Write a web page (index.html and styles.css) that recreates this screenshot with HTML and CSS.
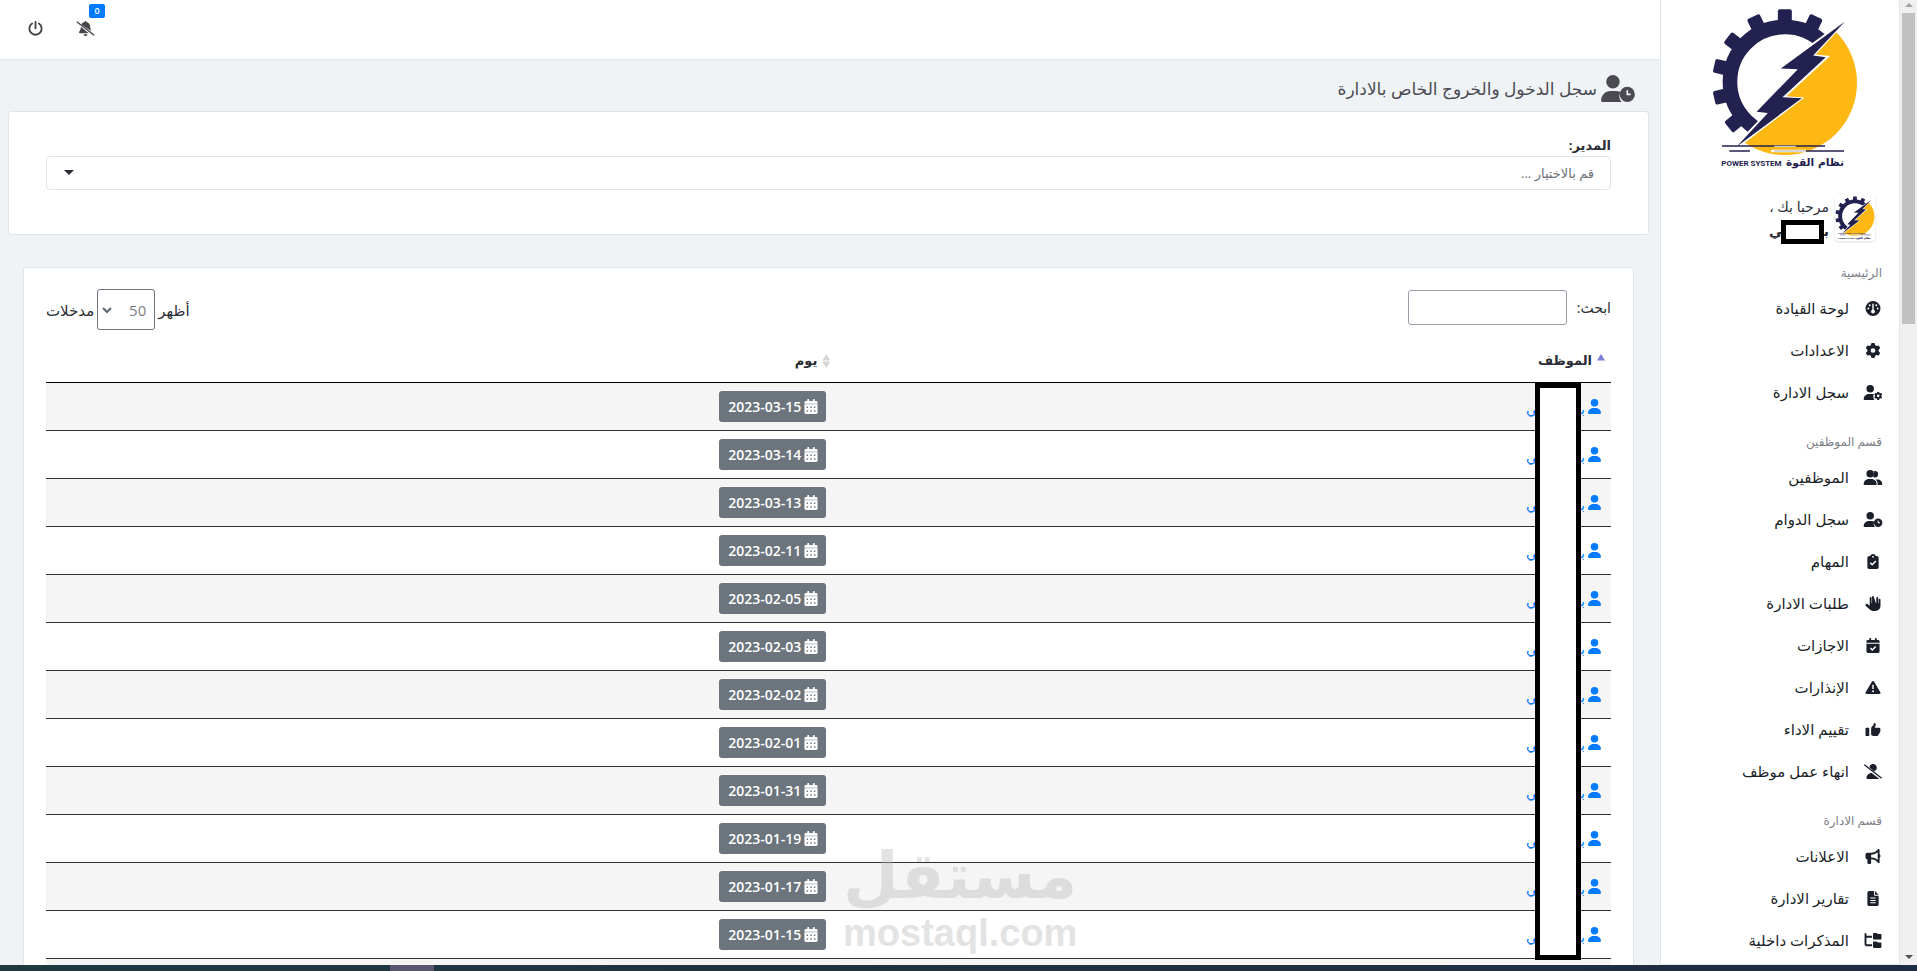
FILE: index.html
```html
<!DOCTYPE html>
<html lang="ar" dir="rtl">
<head>
  <meta charset="UTF-8">
  <meta name="viewport" content="width=device-width, initial-scale=1">
  <title>سجل الدخول والخروج الخاص بالادارة</title>
  <link rel="stylesheet" href="styles.css">
</head>
<body>

  <!-- icon set -->
  <svg class="sprite" aria-hidden="true">
    <symbol id="user" viewBox="0 0 448 512"><path d="M224 256A128 128 0 1 0 224 0a128 128 0 1 0 0 256zm-45.700 48C79.800 304 0 383.800 0 482.300C0 498.700 13.300 512 29.700 512H418.300c16.400 0 29.700-13.300 29.700-29.700C448 383.800 368.200 304 269.700 304H178.300z"/></symbol>
    <symbol id="gear" viewBox="0 0 512 512"><path d="M495.900 166.600c3.200 8.700 .5 18.400-6.400 24.600l-43.300 39.400c1.100 8.300 1.700 16.800 1.700 25.400s-.6 17.100-1.700 25.400l43.300 39.400c6.900 6.200 9.600 15.900 6.400 24.600c-4.400 11.900-9.700 23.300-15.800 34.300l-4.700 8.100c-6.600 11-14 21.400-22.100 31.200c-5.900 7.200-15.700 9.600-24.500 6.800l-55.700-17.700c-13.400 10.300-28.200 18.900-44 25.400l-12.500 57.100c-2 9.100-9 16.300-18.200 17.800c-13.800 2.300-28 3.500-42.500 3.500s-28.700-1.200-42.500-3.500c-9.200-1.500-16.200-8.700-18.200-17.800l-12.500-57.100c-15.800-6.500-30.600-15.100-44-25.400L83.100 425.900c-8.800 2.800-18.600 .3-24.500-6.800c-8.100-9.800-15.500-20.200-22.100-31.200l-4.700-8.100c-6.100-11-11.400-22.400-15.800-34.300c-3.200-8.700-.5-18.400 6.400-24.600l43.300-39.400C64.600 273.100 64 264.600 64 256s.6-17.100 1.700-25.400L22.400 191.200c-6.900-6.200-9.600-15.900-6.400-24.600c4.400-11.900 9.700-23.300 15.800-34.300l4.700-8.100c6.600-11 14-21.400 22.100-31.200c5.900-7.200 15.700-9.600 24.500-6.800l55.700 17.700c13.400-10.300 28.200-18.900 44-25.400l12.500-57.100c2-9.100 9-16.300 18.200-17.800C227.300 1.200 241.500 0 256 0s28.700 1.200 42.500 3.500c9.200 1.500 16.200 8.700 18.200 17.800l12.500 57.100c15.800 6.500 30.600 15.100 44 25.400l55.700-17.700c8.800-2.800 18.600-.3 24.500 6.800c8.100 9.800 15.500 20.200 22.100 31.200l4.700 8.100c6.100 11 11.400 22.400 15.800 34.300zM256 336a80 80 0 1 0 0-160 80 80 0 1 0 0 160z"/></symbol>
    <symbol id="user-clock" viewBox="0 0 640 512">
      <path d="M224 256A128 128 0 1 0 224 0a128 128 0 1 0 0 256zM178 304C80 304 0 384 0 482c0 17 13 30 30 30h362c-50-48-62-128-22-190-28-12-62-18-101-18z"/>
      <path fill-rule="evenodd" d="M496 224a144 144 0 1 1 0 288 144 144 0 1 1 0-288zm-16 64v96h80v-32h-48v-64z"/>
    </symbol>
    <symbol id="user-gear" viewBox="0 0 640 512">
      <path d="M224 256A128 128 0 1 0 224 0a128 128 0 1 0 0 256zM178 304C80 304 0 384 0 482c0 17 13 30 30 30h340c-40-48-52-128-22-195-24-9-48-13-79-13z"/>
      <use href="#gear" x="356" y="228" width="284" height="284"/>
    </symbol>
    <symbol id="users" viewBox="0 0 640 512">
      <path d="M224 256A128 128 0 1 0 224 0a128 128 0 1 0 0 256zM178 304C80 304 0 384 0 482c0 17 13 30 30 30h388c17 0 30-13 30-30 0-98-80-178-178-178zM609 512H471c6-9 9-20 9-32 0-62-28-118-72-156 4-1 12-2 18-2h54c88 0 160 72 160 160 0 17-14 30-31 30zM384 256c-22 0-42-6-58-18 16-24 26-54 26-86 0-36-12-68-30-94 18-12 40-20 62-20a109 109 0 0 1 0 218z"/>
    </symbol>
    <symbol id="user-slash" viewBox="0 0 640 512">
      <path d="M195 108A128 128 0 1 1 355 250zM274 304C176 304 96 384 96 482c0 17 13 30 30 30h388c6 0 12-2 17-5z"/>
      <path class="line" stroke-width="46" d="M24 24 616 488"/>
    </symbol>
    <symbol id="gauge" viewBox="0 0 512 512">
      <path fill-rule="evenodd" d="M256 0a256 256 0 1 1 0 512 256 256 0 1 1 0-512zM232 96v200a66 66 0 1 0 48 0V96zM144 112a32 32 0 1 0 0 64 32 32 0 0 0 0-64zM96 224a32 32 0 1 0 0 64 32 32 0 0 0 0-64zM368 112a32 32 0 1 0 0 64 32 32 0 0 0 0-64zM416 224a32 32 0 1 0 0 64 32 32 0 0 0 0-64z"/>
    </symbol>
    <symbol id="clipboard" viewBox="0 0 384 512">
      <path fill-rule="evenodd" d="M192 0c-42 0-77 27-91 64H64C29 64 0 93 0 128v320c0 35 29 64 64 64h256c35 0 64-29 64-64V128c0-35-29-64-64-64h-37C269 27 234 0 192 0zm0 64a32 32 0 1 1 0 64 32 32 0 1 1 0-64z"/>
      <path class="cut" d="m98 300 66 66 124-130"/>
    </symbol>
    <symbol id="hand" viewBox="0 0 512 512">
      <path d="M288 32a32 32 0 0 0-64 0v208h-16V64a32 32 0 0 0-64 0v272L72 274c-18-16-46-14-62 4s-14 46 4 62l120 112c42 38 86 60 150 60h52c97 0 176-79 176-176V128a32 32 0 0 0-64 0v112h-16V64a32 32 0 0 0-64 0v176h-16z"/>
    </symbol>
    <symbol id="calendar-check" viewBox="0 0 448 512">
      <path d="M128 0c18 0 32 14 32 32v32h128V32a32 32 0 0 1 64 0v32h48c27 0 48 21 48 48v48H0v-48c0-27 21-48 48-48h48V32c0-18 14-32 32-32zM0 192h448v272c0 27-21 48-48 48H48c-27 0-48-21-48-48z"/>
      <path class="cut" d="m138 346 64 64 114-120"/>
    </symbol>
    <symbol id="calendar" viewBox="0 0 448 512">
      <path fill-rule="evenodd" d="M128 0c18 0 32 14 32 32v32h128V32a32 32 0 0 1 64 0v32h48c27 0 48 21 48 48v48H0v-48c0-27 21-48 48-48h48V32c0-18 14-32 32-32zM0 176h448v288c0 27-21 48-48 48H48c-27 0-48-21-48-48zM76 256v48h48v-48zM200 256v48h48v-48zM324 256v48h48v-48zM76 384v48h48v-48zM200 384v48h48v-48zM324 384v48h48v-48z"/>
    </symbol>
    <symbol id="warning" viewBox="0 0 512 512">
      <path fill-rule="evenodd" d="M256 32c14 0 27 7 35 20l216 368c16 27-4 60-35 60H40c-31 0-51-33-35-60L221 52c8-13 21-20 35-20zm-24 128v144h48V160zM256 352a32 32 0 1 0 0 64 32 32 0 0 0 0-64z"/>
    </symbol>
    <symbol id="thumb" viewBox="0 0 512 512">
      <path d="M313 32c26 6 43 31 38 57l-3 12c-5 32-16 62-32 91h144c42 0 66 44 42 80 16 24 10 58-16 72 8 30-8 60-38 66 6 34-20 70-58 70H294c-24 0-46-7-65-20l-37-26V224c0-29 13-57 36-75l13-10c20-16 34-38 39-63l3-12c5-20 16-36 30-32zM32 192h64c18 0 32 14 32 32v224c0 18-14 32-32 32H32c-18 0-32-14-32-32V224c0-18 14-32 32-32z"/>
    </symbol>
    <symbol id="bullhorn" viewBox="0 0 512 512">
      <path fill-rule="evenodd" d="M480 32c0-28-34-42-55-22l-43 43c-48 48-113 75-181 75H64c-35 0-64 29-64 64v96c0 35 29 64 64 64v128c0 18 14 32 32 32h64c18 0 32-14 32-32V352h9c68 0 133 27 181 75l43 43c21 20 55 6 55-22V300c19-10 32-34 32-60s-13-50-32-60zm-64 77v262c-60-54-136-83-215-83h-9v-96h9c79 0 155-29 215-83z"/>
    </symbol>
    <symbol id="file" viewBox="0 0 384 512">
      <path fill-rule="evenodd" d="M64 0C29 0 0 29 0 64v384c0 35 29 64 64 64h256c35 0 64-29 64-64V160H256c-18 0-32-14-32-32V0zM256 0v128h128zM100 224h184v36H100zM100 304h184v36H100zM100 384h184v36H100z"/>
    </symbol>
    <symbol id="folders" viewBox="0 0 576 512">
      <path d="M64 32a32 32 0 0 0-64 0v352c0 35 29 64 64 64h192v-64H64V160h192V96H64zM288 32c0-18 14-32 32-32h96l32 32h96c18 0 32 14 32 32v128c0 18-14 32-32 32H320c-18 0-32-14-32-32zM288 320c0-18 14-32 32-32h96l32 32h96c18 0 32 14 32 32v128c0 18-14 32-32 32H320c-18 0-32-14-32-32z"/>
    </symbol>
    <symbol id="power" viewBox="0 0 512 512">
      <path class="line" stroke-width="64" stroke-linecap="round" d="M256 34v214M140 86a210 210 0 1 0 232 0"/>
    </symbol>
    <symbol id="bell-slash" viewBox="0 0 640 512">
      <path d="M178 118c26-46 66-74 110-84a32 32 0 0 1 64 0c72 16 128 80 128 156v26c0 48 16 94 44 134zM160 200l270 216H128c-30 0-40-36-20-54 34-42 52-94 52-146zM256 448h128a64 64 0 0 1-128 0z"/>
      <path class="line" stroke-width="46" d="M24 24 616 488"/>
    </symbol>
    <symbol id="logo" viewBox="155 20 445 490">
      <clipPath id="gear-side"><path d="M100 0H630L495 103 458 130 297 362 265 395 190 470H100z"/></clipPath>
      <clipPath id="sun-side"><path d="M610 12 470 163 513 167 382 288 436 292 176 490 176 520H620z"/></clipPath>
      <g clip-path="url(#gear-side)" fill="#22214f">
        <circle cx="377" cy="245" r="165" fill="none" stroke="#22214f" stroke-width="44"/>
        <rect x="356" y="27" width="42" height="44" rx="6"/>
        <rect x="356" y="27" width="42" height="44" rx="6" transform="rotate(26 377 245)"/>
        <rect x="356" y="27" width="42" height="44" rx="6" transform="rotate(-26 377 245)"/>
        <rect x="356" y="27" width="42" height="44" rx="6" transform="rotate(-52 377 245)"/>
        <rect x="356" y="27" width="42" height="44" rx="6" transform="rotate(-77 377 245)"/>
        <rect x="356" y="27" width="42" height="44" rx="6" transform="rotate(-103 377 245)"/>
        <rect x="356" y="27" width="42" height="44" rx="6" transform="rotate(-129 377 245)"/>
      </g>
      <circle cx="377" cy="248" r="217" fill="#fdb813" clip-path="url(#sun-side)"/>
      <path fill="#22214f" d="M557 64 462 166 500 171 370 291 428 294 240 434 232 440 326 339 292 335 416 207 365 205z"/>
      <path stroke="#22214f" stroke-width="5" d="M188 438H498M210 453H272M440 453H555"/>
      <path stroke="#fff" stroke-width="7" d="M336 453H440"/>
      <path stroke="#c9c9cf" stroke-width="4" d="M345 439H410M345 453H440"/>
      <text x="186" y="499" direction="ltr" class="logo-en">POWER SYSTEM</text>
      <text x="555" y="499" direction="rtl" class="logo-ar">نظام القوة</text>
    </symbol>
  </svg>

  <div class="shell">
    <div class="scrollbar" aria-hidden="true">
      <span class="arrow up"></span>
      <span class="thumb"></span>
      <span class="arrow down"></span>
    </div>

    <aside class="sidebar">
      <svg class="logo" role="img" aria-label="نظام القوة"><use href="#logo"/></svg>
      <div class="profile">
        <svg class="avatar"><use href="#logo"/></svg>
        <div class="welcome">
          <div>مرحبا بك ،</div>
          <div class="name"><span>بـ</span><span>ـي</span><i class="hide-name"></i></div>
        </div>
      </div>
      <nav>
        <h6>الرئيسية</h6>
        <a href="#"><svg><use href="#gauge"/></svg>لوحة القيادة</a>
        <a href="#"><svg><use href="#gear"/></svg>الاعدادات</a>
        <a href="#"><svg><use href="#user-gear"/></svg>سجل الادارة</a>
        <h6>قسم الموظفين</h6>
        <a href="#"><svg><use href="#users"/></svg>الموظفين</a>
        <a href="#"><svg><use href="#user-clock"/></svg>سجل الدوام</a>
        <a href="#"><svg><use href="#clipboard"/></svg>المهام</a>
        <a href="#"><svg><use href="#hand"/></svg>طلبات الادارة</a>
        <a href="#"><svg><use href="#calendar-check"/></svg>الاجازات</a>
        <a href="#"><svg><use href="#warning"/></svg>الإنذارات</a>
        <a href="#"><svg><use href="#thumb"/></svg>تقييم الاداء</a>
        <a href="#"><svg><use href="#user-slash"/></svg>انهاء عمل موظف</a>
        <h6>قسم الادارة</h6>
        <a href="#"><svg><use href="#bullhorn"/></svg>الاعلانات</a>
        <a href="#"><svg><use href="#file"/></svg>تقارير الادارة</a>
        <a href="#"><svg><use href="#folders"/></svg>المذكرات داخلية</a>
      </nav>
    </aside>

    <div class="page">
      <header class="topbar">
        <button class="icon-btn" type="button" aria-label="الاشعارات"><svg class="bell"><use href="#bell-slash"/></svg><span class="count">0</span></button>
        <button class="icon-btn" type="button" aria-label="خروج"><svg><use href="#power"/></svg></button>
      </header>

      <main>
        <h1><svg><use href="#user-clock"/></svg>سجل الدخول والخروج الخاص بالادارة</h1>

        <section class="card filter">
          <label for="manager">المدير:</label>
          <select id="manager">
            <option>قم بالاختيار ...</option>
          </select>
        </section>

        <section class="card records">
          <div class="tools">
            <label class="search" for="search">ابحث:<input id="search" type="search"></label>
            <label class="length" for="length">أظهر
              <select id="length"><option>50</option></select>
              مدخلات</label>
          </div>
          <div class="table-wrap">
            <table>
              <thead>
                <tr>
                  <th class="employee"><span class="sort asc"></span>الموظف</th>
                  <th><span class="sort"></span>يوم</th>
                </tr>
              </thead>
              <tbody>
                <tr><td><a href="#"><svg><use href="#user"/></svg><span>بـ</span><span>ـي</span></a></td><td><span class="day"><svg><use href="#calendar"/></svg>2023-03-15</span></td></tr>
                <tr><td><a href="#"><svg><use href="#user"/></svg><span>بـ</span><span>ـي</span></a></td><td><span class="day"><svg><use href="#calendar"/></svg>2023-03-14</span></td></tr>
                <tr><td><a href="#"><svg><use href="#user"/></svg><span>بـ</span><span>ـي</span></a></td><td><span class="day"><svg><use href="#calendar"/></svg>2023-03-13</span></td></tr>
                <tr><td><a href="#"><svg><use href="#user"/></svg><span>بـ</span><span>ـي</span></a></td><td><span class="day"><svg><use href="#calendar"/></svg>2023-02-11</span></td></tr>
                <tr><td><a href="#"><svg><use href="#user"/></svg><span>بـ</span><span>ـي</span></a></td><td><span class="day"><svg><use href="#calendar"/></svg>2023-02-05</span></td></tr>
                <tr><td><a href="#"><svg><use href="#user"/></svg><span>بـ</span><span>ـي</span></a></td><td><span class="day"><svg><use href="#calendar"/></svg>2023-02-03</span></td></tr>
                <tr><td><a href="#"><svg><use href="#user"/></svg><span>بـ</span><span>ـي</span></a></td><td><span class="day"><svg><use href="#calendar"/></svg>2023-02-02</span></td></tr>
                <tr><td><a href="#"><svg><use href="#user"/></svg><span>بـ</span><span>ـي</span></a></td><td><span class="day"><svg><use href="#calendar"/></svg>2023-02-01</span></td></tr>
                <tr><td><a href="#"><svg><use href="#user"/></svg><span>بـ</span><span>ـي</span></a></td><td><span class="day"><svg><use href="#calendar"/></svg>2023-01-31</span></td></tr>
                <tr><td><a href="#"><svg><use href="#user"/></svg><span>بـ</span><span>ـي</span></a></td><td><span class="day"><svg><use href="#calendar"/></svg>2023-01-19</span></td></tr>
                <tr><td><a href="#"><svg><use href="#user"/></svg><span>بـ</span><span>ـي</span></a></td><td><span class="day"><svg><use href="#calendar"/></svg>2023-01-17</span></td></tr>
                <tr><td><a href="#"><svg><use href="#user"/></svg><span>بـ</span><span>ـي</span></a></td><td><span class="day"><svg><use href="#calendar"/></svg>2023-01-15</span></td></tr>
                <tr><td></td><td></td></tr>
              </tbody>
            </table>
            <i class="hide-column"></i>
          </div>
        </section>
      </main>
    </div>
  </div>

  <div class="taskbar"><span></span></div>

  <div class="watermark" aria-hidden="true">
    <div class="wm-ar">مستقل</div>
    <div class="wm-en">mostaql.com</div>
  </div>

</body>
</html>
```
FILE: styles.css
```css
* {
  box-sizing: border-box;
}
body {
  margin: 0;
  height: 100vh;
  display: flex;
  flex-direction: column;
  overflow: hidden;
  position: relative;
  font-family: "Open Sans", "DejaVu Sans", sans-serif;
  font-size: 14px;
  color: #2b2d35;
  background: #eff3f6;
}
svg {
  fill: currentColor;
  flex: none;
}
.sprite {
  position: absolute;
  width: 0;
  height: 0;
}
.line {
  fill: none;
  stroke: currentColor;
}
.cut {
  fill: none;
  stroke: #fff;
  stroke-width: 50;
}
a {
  text-decoration: none;
}
select,
input,
button {
  font: inherit;
}

.shell {
  flex: 1;
  min-height: 0;
  display: flex;
  overflow: hidden;
}

/* scrollbar */
.scrollbar {
  width: 17px;
  background: #f0f0f0;
  display: flex;
  flex-direction: column;
  align-items: center;
}
.scrollbar .thumb {
  width: 13px;
  height: 311px;
  background: #c1c1c1;
  margin-bottom: auto;
}
.arrow {
  border: 4px solid transparent;
}
.arrow.up {
  border-top: 0;
  border-bottom-color: #a3a3a3;
  margin: 3px 0 6px;
}
.arrow.down {
  border-bottom: 0;
  border-top-color: #505050;
  margin-bottom: 6px;
}

/* sidebar */
.sidebar {
  width: 240px;
  background: #fff;
  border: 1px solid #dee5ed;
  border-top: 0;
  overflow: hidden;
}
.logo {
  display: block;
  width: 148px;
  height: 163px;
  margin: 7px 40px 0;
}
.logo-en,
.logo-ar {
  fill: #22214f;
  font-weight: bold;
}
.logo-en {
  font-family: "Roboto", sans-serif;
  font-size: 24px;
}
.logo-ar {
  font-family: "DejaVu Sans", sans-serif;
  font-size: 32px;
}
.profile {
  display: flex;
  gap: 6px;
  padding: 25px 24px 0;
  height: 74px;
}
.avatar {
  width: 40px;
  height: 46px;
  border-radius: 4px;
  box-shadow: 0 1px 3px #ddd;
}
.welcome {
  line-height: 24px;
}
.name {
  display: flex;
  justify-content: space-between;
  width: 60px;
  position: relative;
  font-weight: bold;
}
.hide-name {
  position: absolute;
  right: 5px;
  top: 1px;
  width: 43px;
  height: 24px;
  background: #fff;
  border: 5px solid #000;
}
nav h6 {
  margin: 0;
  padding: 20px 17px 5px;
  font-size: 12px;
  font-weight: normal;
  line-height: 18px;
  color: #7b8088;
}
nav a {
  display: flex;
  align-items: center;
  gap: 13px;
  height: 42px;
  padding: 0 15px;
  font-size: 15px;
  color: #1b1f29;
}
nav svg {
  width: 22px;
  height: 15px;
}

/* content */
.page {
  flex: 1;
  min-width: 0;
}
.topbar {
  height: 60px;
  padding: 0 28px 3px;
  display: flex;
  align-items: center;
  justify-content: flex-end;
  gap: 33px;
  background: #fff;
  border-bottom: 1px solid #dee5ed;
}
.icon-btn {
  position: relative;
  display: flex;
  padding: 0;
  border: 0;
  background: none;
  color: #45454c;
}
.icon-btn svg {
  width: 15px;
  height: 15px;
}
.icon-btn .bell {
  width: 19px;
}
.count {
  position: absolute;
  left: 13px;
  top: -17px;
  width: 16px;
  height: 14px;
  border-radius: 2px;
  background: #007bff;
  color: #fff;
  font-size: 9px;
  font-weight: 600;
  line-height: 14px;
}
h1 {
  display: flex;
  align-items: center;
  gap: 4px;
  height: 51px;
  margin: 0;
  padding: 5px 25px 0;
  font-size: 17px;
  font-weight: normal;
  color: #4b4a53;
}
h1 svg {
  width: 34px;
  height: 27px;
}
.card {
  background: #fff;
  border: 1px solid #dee5ea;
  border-radius: 3px;
}
.filter {
  margin: 0 11px 0 8px;
  height: 124px;
  padding: 23px 37px 0;
}
.filter label {
  display: block;
  line-height: 21px;
  font-size: 13px;
  font-weight: bold;
}
.filter select {
  display: block;
  width: 100%;
  height: 34px;
  padding: 0 16px;
  appearance: none;
  border: 1px solid #dee5ea;
  border-radius: 4px;
  font-size: 13px;
  color: #6b7179;
  background: #fff url("data:image/svg+xml,%3Csvg xmlns='http://www.w3.org/2000/svg' width='10' height='5'%3E%3Cpath d='M0 0h10L5 5z' fill='%232b2d35'/%3E%3C/svg%3E") no-repeat 17px 13px;
}
.records {
  margin: 32px 26px 0 23px;
  padding: 21px 22px 0;
}
.tools {
  display: flex;
  justify-content: space-between;
  align-items: flex-start;
  height: 43px;
}
.search {
  display: flex;
  align-items: center;
  gap: 10px;
  height: 36px;
  font-size: 14px;
}
.search input {
  width: 159px;
  height: 35px;
  border: 1px solid #9a9da8;
  border-radius: 3px;
  appearance: none;
}
.length {
  display: flex;
  align-items: center;
  gap: 3px;
  font-size: 15px;
}
.length select {
  width: 58px;
  height: 41px;
  padding: 0 8px;
  appearance: none;
  border: 1px solid #6c757d;
  border-radius: 3px;
  color: #7b8088;
  background: #fff url("data:image/svg+xml,%3Csvg xmlns='http://www.w3.org/2000/svg' width='10' height='7'%3E%3Cpath d='M1 1l4 4 4-4' fill='none' stroke='%235f6670' stroke-width='2'/%3E%3C/svg%3E") no-repeat 4px 17px;
}
.table-wrap {
  position: relative;
}
table {
  width: 100%;
  table-layout: fixed;
  border-collapse: separate;
  border-spacing: 0;
}
th {
  height: 51px;
  padding: 5px 6px 0 0;
  text-align: right;
  font-size: 13px;
  border-bottom: 1px solid #000;
}
.employee {
  width: 49.5%;
}
td {
  height: 48px;
  padding: 0 10px;
  border-bottom: 1px solid #2f3038;
}
tbody tr:nth-child(odd) {
  background: #f5f5f5;
}
.sort {
  display: inline-block;
  width: 8px;
  height: 14px;
  margin-left: 5px;
  vertical-align: middle;
  background: #d5d5d8;
  clip-path: polygon(50% 0, 100% 46%, 0 46%, 0 54%, 100% 54%, 50% 100%, 0 54%, 0 46%);
}
.sort.asc {
  background: #7a7fd8;
  clip-path: polygon(50% 0, 100% 46%, 0 46%);
}
td a {
  display: flex;
  align-items: center;
  width: 75px;
  color: #007bff;
}
td a svg {
  width: 13px;
  height: 15px;
  margin-left: 3px;
}
td a span {
  padding-top: 4px;
}
td a span:last-child {
  margin-right: auto;
}
.day {
  display: inline-flex;
  align-items: center;
  gap: 3px;
  height: 31px;
  padding: 0 8px 0 9px;
  border-radius: 3px;
  background: #6c757d;
  color: #fff;
  font-weight: 600;
}
.day svg {
  width: 14px;
  height: 15px;
}
.hide-column {
  position: absolute;
  right: 30px;
  top: 51px;
  width: 46px;
  height: 577px;
  background: #fff;
  border: 5px solid #000;
}

.taskbar {
  flex: none;
  height: 6px;
  background: linear-gradient(to right, #20393f, #1f3040 60%, #1e2b44);
  direction: ltr;
}
.taskbar span {
  display: block;
  width: 44px;
  height: 6px;
  margin-left: 390px;
  background: #56566e;
}

.watermark {
  position: absolute;
  left: 843px;
  bottom: 16px;
  width: 230px;
  text-align: center;
  font-weight: bold;
  color: #bbb;
  opacity: 0.4;
  direction: ltr;
}
.wm-ar {
  font-family: "DejaVu Sans", sans-serif;
  font-size: 64px;
  line-height: 70px;
}
.wm-en {
  font-family: "Liberation Sans", sans-serif;
  font-size: 38px;
  line-height: 44px;
}
```
